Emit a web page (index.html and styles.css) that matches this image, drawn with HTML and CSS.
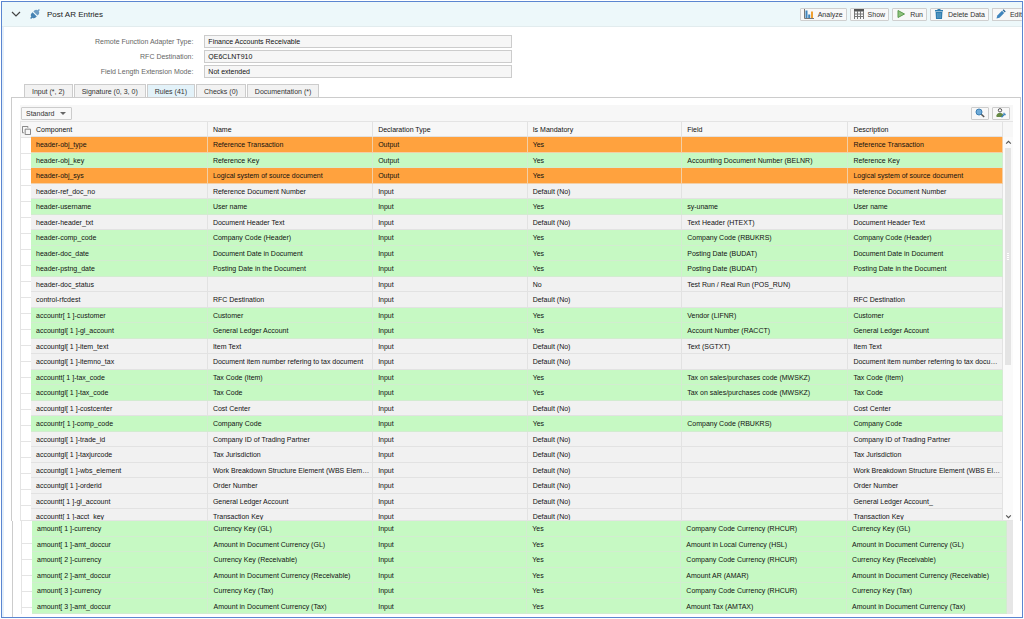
FILE: index.html
```
<!DOCTYPE html>
<html lang="en">
<head>
    <meta charset="UTF-8">
    <meta name="viewport" content="width=device-width, initial-scale=1.0">
    <title>Post AR Entries</title>
    <link rel="stylesheet" href="styles.css">
</head>
<body>
<div class="page">

    <header class="title-bar">
        <svg class="chevron" viewBox="0 0 10 10"><path d="M1 3l4 4 4-4" fill="none" stroke="#444" stroke-width="1.2"/></svg>
        <svg class="link-icon" viewBox="0 0 10 10">
            <path d="M2.600 3.200L6.800 7.400 5.600 8.600C4.600 9.400 3.200 9.400 2.300 8.700L1.100 9.900.1 8.900 1.300 7.700C.6 6.600.6 5.400 1.400 4.400z" fill="#4583b3"/>
            <path d="M3.400 2.400l1.200-1.200C5.600.4 6.800.5 7.700 1.200L8.900 0l1 1-1.200 1.200C9.400 3.200 9.400 4.400 8.600 5.400L7.500 6.600z" fill="#6b9cc3"/>
        </svg>
        <h1>Post AR Entries</h1>
        <div class="actions">
            <button type="button">
                <svg viewBox="0 0 10 10"><path d="M.5 0v9.500H10" fill="none" stroke="#777"/><path d="M1.500 1.500h2V9h-2z" fill="#3f85bd"/><path d="M4.200 5.500h2V9h-2z" fill="#3f85bd"/><path d="M7 2.500h2V9H7z" fill="#f0a030"/></svg>
                Analyze
            </button>
            <button type="button">
                <svg viewBox="0 0 10 10"><path d="M0 0h10v2.500H0z" fill="#555"/><path d="M0 5h10M0 7.500h10M.5 2v8M3.500 2v8M6.500 2v8M9.500 2v8" stroke="#777" fill="none"/></svg>
                Show
            </button>
            <button type="button">
                <svg viewBox="0 0 10 10"><path d="M2 1.500v7L8.500 5z" fill="#8fc27d" stroke="#5d9b50"/></svg>
                Run
            </button>
            <button type="button">
                <svg viewBox="0 0 10 10"><path d="M3.500 1V0h3v1H9v1.500H1V1zM1.600 3h6.800L8 10H2z" fill="#2f7db0"/><path d="M3.700 4v5M5 4v5M6.300 4v5" stroke="#8bbad8" stroke-width=".5"/></svg>
                Delete Data
            </button>
            <button type="button" class="last">
                <svg viewBox="0 0 10 10"><path d="M.5 9.500l.8-3L6 1.800 8.200 4 3.500 8.700z" fill="#3f85bd"/><path d="M6.600 1.200L7.600.3 9.700 2.400 8.800 3.400z" fill="#2c6797"/></svg>
                Edit
            </button>
        </div>
    </header>

    <form class="settings">
        <label for="adapter">Remote Function Adapter Type:</label>
        <input id="adapter" type="text" value="Finance Accounts Receivable" readonly>
        <label for="rfc">RFC Destination:</label>
        <input id="rfc" type="text" value="QE6CLNT910" readonly>
        <label for="mode">Field Length Extension Mode:</label>
        <input id="mode" type="text" value="Not extended" readonly>
    </form>

    <nav class="tabs">
        <button type="button">Input (*, 2)</button>
        <button type="button">Signature (0, 3, 0)</button>
        <button type="button" class="active">Rules (41)</button>
        <button type="button">Checks (0)</button>
        <button type="button">Documentation (*)</button>
    </nav>

    <main class="panel">
        <div class="toolbar">
            <div class="view">
                <select aria-label="View"><option>Standard</option></select>
            </div>
            <button type="button" aria-label="Search">
                <svg viewBox="0 0 10 10"><path d="M6 6l3.200 3" stroke="#555" stroke-width="1.500"/><circle cx="4" cy="4" r="3" fill="#6fabd8" stroke="#3c7fb3"/></svg>
            </button>
            <button type="button" aria-label="Personalize">
                <svg viewBox="0 0 10 10"><circle cx="4" cy="2.300" r="1.700" fill="#fff" stroke="#555"/><path d="M.5 9V7.200C1 5.500 2.200 5 4 5s2.500.5 3 1.500V9z" fill="#668a45"/><path d="M5.500 9.200l3-3M8 4.800v1.700h1.700" fill="none" stroke="#3f85bd" stroke-width="1.300"/></svg>
            </button>
        </div>

        <div class="grid">
            <div class="gutter">
                <div class="corner">
                    <svg viewBox="0 0 10 10"><path d="M3.500 3.500h6v6h-6zM2 7.500H.5v-7h6V2" fill="none" stroke="#777"/></svg>
                </div>
            </div>
            <table>
                <colgroup>
                    <col class="c-component"><col class="c-name"><col class="c-type"><col class="c-mandatory"><col class="c-field"><col class="c-desc">
                </colgroup>
                <thead>
                    <tr><th>Component</th><th>Name</th><th>Declaration Type</th><th>Is Mandatory</th><th>Field</th><th>Description</th></tr>
                </thead>
                <tbody>
                    <tr class="orange"><td>header-obj_type</td><td>Reference Transaction</td><td>Output</td><td>Yes</td><td></td><td>Reference Transaction</td></tr>
                    <tr class="green"><td>header-obj_key</td><td>Reference Key</td><td>Output</td><td>Yes</td><td>Accounting Document Number (BELNR)</td><td>Reference Key</td></tr>
                    <tr class="orange"><td>header-obj_sys</td><td>Logical system of source document</td><td>Output</td><td>Yes</td><td></td><td>Logical system of source document</td></tr>
                    <tr><td>header-ref_doc_no</td><td>Reference Document Number</td><td>Input</td><td>Default (No)</td><td></td><td>Reference Document Number</td></tr>
                    <tr class="green"><td>header-username</td><td>User name</td><td>Input</td><td>Yes</td><td>sy-uname</td><td>User name</td></tr>
                    <tr><td>header-header_txt</td><td>Document Header Text</td><td>Input</td><td>Default (No)</td><td>Text Header (HTEXT)</td><td>Document Header Text</td></tr>
                    <tr class="green"><td>header-comp_code</td><td>Company Code (Header)</td><td>Input</td><td>Yes</td><td>Company Code (RBUKRS)</td><td>Company Code (Header)</td></tr>
                    <tr class="green"><td>header-doc_date</td><td>Document Date in Document</td><td>Input</td><td>Yes</td><td>Posting Date (BUDAT)</td><td>Document Date in Document</td></tr>
                    <tr class="green"><td>header-pstng_date</td><td>Posting Date in the Document</td><td>Input</td><td>Yes</td><td>Posting Date (BUDAT)</td><td>Posting Date in the Document</td></tr>
                    <tr><td>header-doc_status</td><td></td><td>Input</td><td>No</td><td>Test Run / Real Run (POS_RUN)</td><td></td></tr>
                    <tr><td>control-rfcdest</td><td>RFC Destination</td><td>Input</td><td>Default (No)</td><td></td><td>RFC Destination</td></tr>
                    <tr class="green"><td>accountr[ 1 ]-customer</td><td>Customer</td><td>Input</td><td>Yes</td><td>Vendor (LIFNR)</td><td>Customer</td></tr>
                    <tr class="green"><td>accountgl[ 1 ]-gl_account</td><td>General Ledger Account</td><td>Input</td><td>Yes</td><td>Account Number (RACCT)</td><td>General Ledger Account</td></tr>
                    <tr><td>accountgl[ 1 ]-item_text</td><td>Item Text</td><td>Input</td><td>Default (No)</td><td>Text (SGTXT)</td><td>Item Text</td></tr>
                    <tr><td>accountgl[ 1 ]-itemno_tax</td><td>Document item number refering to tax document</td><td>Input</td><td>Default (No)</td><td></td><td>Document item number referring to tax docum…</td></tr>
                    <tr class="green"><td>accountt[ 1 ]-tax_code</td><td>Tax Code (Item)</td><td>Input</td><td>Yes</td><td>Tax on sales/purchases code (MWSKZ)</td><td>Tax Code (Item)</td></tr>
                    <tr class="green"><td>accountgl[ 1 ]-tax_code</td><td>Tax Code</td><td>Input</td><td>Yes</td><td>Tax on sales/purchases code (MWSKZ)</td><td>Tax Code</td></tr>
                    <tr><td>accountgl[ 1 ]-costcenter</td><td>Cost Center</td><td>Input</td><td>Default (No)</td><td></td><td>Cost Center</td></tr>
                    <tr class="green"><td>accountr[ 1 ]-comp_code</td><td>Company Code</td><td>Input</td><td>Yes</td><td>Company Code (RBUKRS)</td><td>Company Code</td></tr>
                    <tr><td>accountgl[ 1 ]-trade_id</td><td>Company ID of Trading Partner</td><td>Input</td><td>Default (No)</td><td></td><td>Company ID of Trading Partner</td></tr>
                    <tr><td>accountgl[ 1 ]-taxjurcode</td><td>Tax Jurisdiction</td><td>Input</td><td>Default (No)</td><td></td><td>Tax Jurisdiction</td></tr>
                    <tr><td>accountgl[ 1 ]-wbs_element</td><td>Work Breakdown Structure Element (WBS Elem…</td><td>Input</td><td>Default (No)</td><td></td><td>Work Breakdown Structure Element (WBS Ele…</td></tr>
                    <tr><td>accountgl[ 1 ]-orderid</td><td>Order Number</td><td>Input</td><td>Default (No)</td><td></td><td>Order Number</td></tr>
                    <tr><td>accountt[ 1 ]-gl_account</td><td>General Ledger Account</td><td>Input</td><td>Default (No)</td><td></td><td>General Ledger Account_</td></tr>
                    <tr><td>accountt[ 1 ]-acct_key</td><td>Transaction Key</td><td>Input</td><td>Default (No)</td><td></td><td>Transaction Key</td></tr>
                </tbody>
            </table>
            <div class="scroll">
                <svg viewBox="0 0 6 6"><path d="M1 4l2-2 2 2" fill="none" stroke="#555"/></svg>
                <div class="thumb"></div>
                <svg viewBox="0 0 6 6"><path d="M1 2l2 2 2-2" fill="none" stroke="#555"/></svg>
            </div>
        </div>
    </main>

    <section class="more">
        <div class="gutter"></div>
        <table>
            <colgroup>
                <col class="c-component"><col class="c-name"><col class="c-type"><col class="c-mandatory"><col class="c-field"><col class="c-desc">
            </colgroup>
            <tbody>
                <tr class="green"><td>amount[ 1 ]-currency</td><td>Currency Key (GL)</td><td>Input</td><td>Yes</td><td>Company Code Currency (RHCUR)</td><td>Currency Key (GL)</td></tr>
                <tr class="green"><td>amount[ 1 ]-amt_doccur</td><td>Amount in Document Currency (GL)</td><td>Input</td><td>Yes</td><td>Amount in Local Currency (HSL)</td><td>Amount in Document Currency (GL)</td></tr>
                <tr class="green"><td>amount[ 2 ]-currency</td><td>Currency Key (Receivable)</td><td>Input</td><td>Yes</td><td>Company Code Currency (RHCUR)</td><td>Currency Key (Receivable)</td></tr>
                <tr class="green"><td>amount[ 2 ]-amt_doccur</td><td>Amount in Document Currency (Receivable)</td><td>Input</td><td>Yes</td><td>Amount AR (AMAR)</td><td>Amount in Document Currency (Receivable)</td></tr>
                <tr class="green"><td>amount[ 3 ]-currency</td><td>Currency Key (Tax)</td><td>Input</td><td>Yes</td><td>Company Code Currency (RHCUR)</td><td>Currency Key (Tax)</td></tr>
                <tr class="green"><td>amount[ 3 ]-amt_doccur</td><td>Amount in Document Currency (Tax)</td><td>Input</td><td>Yes</td><td>Amount Tax (AMTAX)</td><td>Amount in Document Currency (Tax)</td></tr>
            </tbody>
        </table>
        <div class="scroll-rest"></div>
    </section>

</div>
</body>
</html>
```
FILE: styles.css
```
* {
    margin: 0;
    padding: 0;
    box-sizing: border-box;
    font-family: "Liberation Sans", Arial, sans-serif;
}

body {
    height: 100vh;
    padding: 1px;
    background: #fff;
    color: #111;
    font-size: 7px;
    overflow: hidden;
}

.page {
    display: flex;
    flex-direction: column;
    height: 100%;
    border: 1px solid #5b86d0;
    box-shadow: inset 2px 0 #e6f0fa;
    overflow: hidden;
}

button, input, select {
    font-size: 7px;
    color: #333;
}

/* title bar */
.title-bar {
    display: flex;
    align-items: center;
    height: 25px;
    padding-left: 9px;
    background: #edf8fa;
    border-bottom: 1px solid #e2ecee;
}

.title-bar h1 {
    font-size: 8px;
    font-weight: normal;
    color: #222;
}

.chevron {
    width: 10px;
    height: 10px;
    margin-right: 9px;
}

.link-icon {
    width: 10px;
    height: 10px;
    margin-right: 7px;
}

.actions {
    display: flex;
    gap: 3px;
    margin-left: auto;
}

.actions button {
    display: flex;
    align-items: center;
    gap: 4px;
    height: 13px;
    padding: 0 3px;
    background: #f8f8f8;
    border: 1px solid #cfcfcf;
    border-radius: 1px;
    white-space: nowrap;
}

.actions svg {
    width: 10px;
    height: 10px;
}

.actions .last {
    padding-right: 0;
    border-right: none;
}

/* header fields */
.settings {
    display: grid;
    grid-template-columns: 19% 308px;
    grid-auto-rows: 13px;
    gap: 2px 11px;
    align-items: center;
    margin-left: -3px;
    padding-top: 8px;
}

.settings label {
    text-align: right;
    color: #666;
}

.settings input {
    width: 100%;
    height: 13px;
    padding: 0 3px;
    background: #f6f6f6;
    border: 1px solid #ccc;
    color: #111;
}

/* tabs */
.tabs {
    display: flex;
    gap: 1px;
    padding: 6px 0 0 22px;
}

.tabs button {
    height: 13px;
    padding: 0 7px;
    background: #f2f2f2;
    border: 1px solid #ccc;
    border-bottom: none;
}

.tabs .active {
    background: #e3f2f9;
}

/* rules panel */
.panel {
    display: flex;
    flex-direction: column;
    flex: 1;
    min-height: 0;
    margin: 0 1px 0 9px;
    padding: 7px 7px 0 8px;
    border: 1px solid #ccc;
    border-bottom: none;
}

.toolbar {
    display: flex;
    align-items: center;
    gap: 3px;
    flex-shrink: 0;
    height: 16px;
    padding: 0 3px 0 1px;
    background: #f7f7f7;
}

.toolbar button {
    display: flex;
    align-items: center;
    justify-content: center;
    width: 18px;
    height: 13px;
    background: #f8f8f8;
    border: 1px solid #ccc;
    border-radius: 1px;
}

.toolbar svg {
    flex: none;
    width: 10px;
    height: 10px;
}

.view {
    position: relative;
    margin-right: auto;
}

.view select {
    display: block;
    appearance: none;
    width: 51px;
    height: 13px;
    padding: 0 4px;
    background: #f8f8f8;
    border: 1px solid #ccc;
    border-radius: 1px;
}

.view::after {
    content: "";
    position: absolute;
    right: 6px;
    top: 5px;
    border: 3px solid transparent;
    border-top-color: #666;
    border-bottom: none;
    pointer-events: none;
}

.grid {
    display: flex;
    flex: 1;
    min-height: 0;
    overflow: hidden;
    border-top: 1px solid #e4e4e4;
    border-bottom: 1px solid #e4e4e4;
}

.gutter {
    flex: 0 0 11px;
    border-left: 1px solid #e4e4e4;
    background: repeating-linear-gradient(#fff 0 15px, #e4e4e4 15px 16px);
}

.corner {
    height: 15px;
    padding: 4px 0 0 1px;
    background: #f7f7f7;
}

.corner svg {
    display: block;
    width: 9px;
    height: 9px;
}

/* tables */
table {
    flex: 1;
    width: 0;
    align-self: flex-start;
    table-layout: fixed;
    border-spacing: 0;
}

.c-component { width: 18.2%; }
.c-name { width: 17%; }
.c-type { width: 15.9%; }
.c-mandatory { width: 15.9%; }
.c-field { width: 17.1%; }
.c-desc { width: 15.9%; }

th, td {
    height: 16px;
    padding: 0 0 0 5px;
    border-right: 1px solid #e2e2e2;
    border-bottom: 1px solid #e2e2e2;
    font-weight: normal;
    text-align: left;
    line-height: 9px;
    white-space: nowrap;
    overflow: hidden;
    text-overflow: ellipsis;
}

th {
    height: 15px;
    background: #f7f7f7;
}

td {
    background: #f1f1f1;
}

tr:nth-child(even) td {
    height: 15px;
}

.green td {
    background: #c6f9c3;
    border-color: #d2ecd0;
}

.orange td {
    background: #ffa23e;
    border-color: #f3cfa6;
}

.scroll {
    display: flex;
    flex-direction: column;
    align-items: center;
    justify-content: space-between;
    flex: 0 0 10px;
    padding-top: 17px;
    background: linear-gradient(#f7f7f7 0 15px, #fafafa 15px);
}

.scroll svg {
    flex: none;
    width: 7px;
    height: 7px;
}

.thumb {
    display: flex;
    flex: 0 0 57%;
    width: 6px;
    margin: 2px 0 auto;
    background: #e4e4e4;
}

.thumb::after {
    content: "";
    width: 2px;
    height: 7px;
    margin: auto;
    background: repeating-linear-gradient(#fff 0 1px, #e4e4e4 1px 2px);
}

/* remaining rows */
.more {
    display: flex;
    margin: 0 9px 0 10px;
    padding: 0 0 3px 8px;
    border-left: 1px solid #ccc;
}

.more .gutter {
    background-position: 0 7px;
}

.more .c-component { width: 18.1%; }
.more .c-name { width: 16.9%; }
.more .c-type { width: 15.8%; }
.more .c-mandatory { width: 15.8%; }
.more .c-field { width: 17%; }
.more .c-desc { width: 16.4%; }

.scroll-rest {
    flex: 0 0 6px;
    background: #e6e6e6;
}
```
